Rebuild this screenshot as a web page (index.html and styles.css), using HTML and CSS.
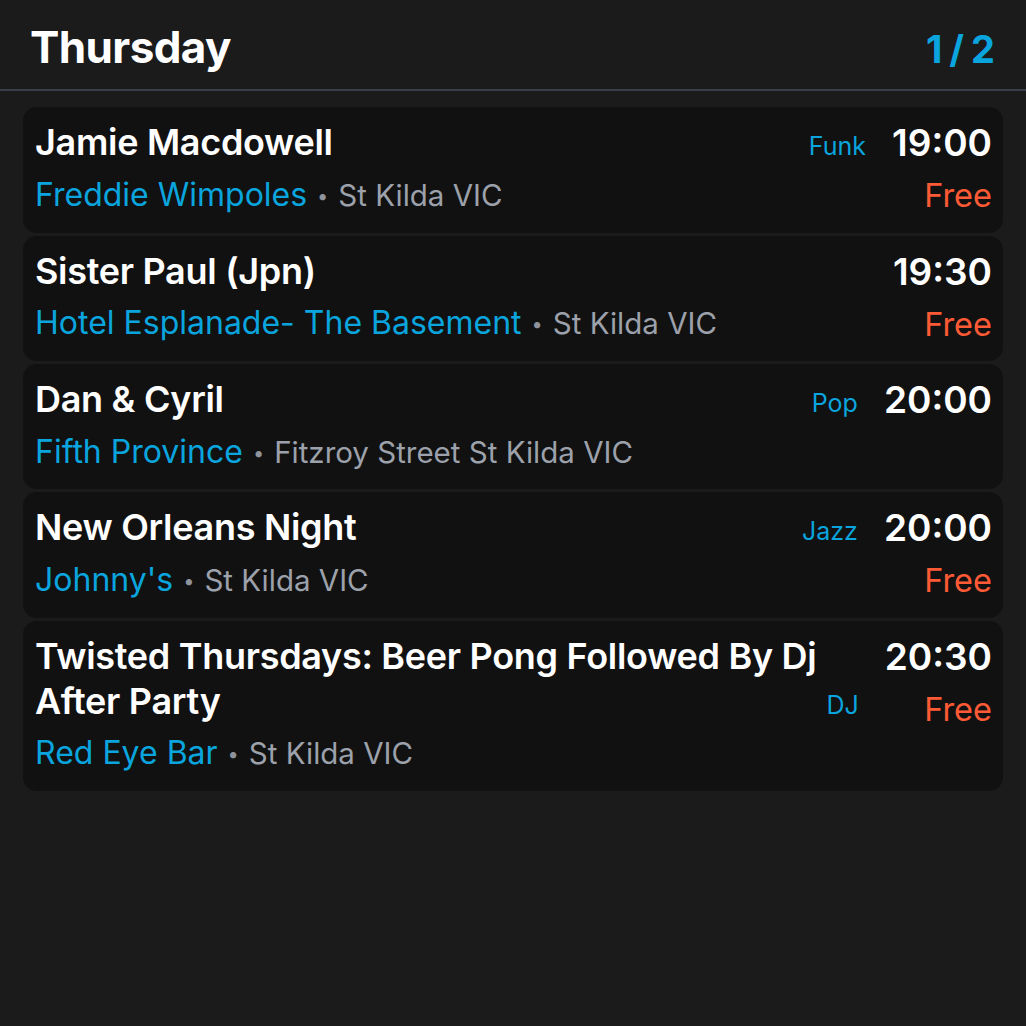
FILE: index.html
```html
<!DOCTYPE html>
<html lang="en">
<head>
<meta charset="utf-8">
<title>Thursday</title>
<link rel="stylesheet" href="styles.css">
</head>
<body>
<div class="screen">
  <header class="header">
    <h1 class="day">Thursday</h1>
    <div class="page">1 / 2</div>
  </header>
  <main class="list">
    <article class="card">
      <div class="main">
        <div class="title-row">
          <div class="title">Jamie Macdowell</div>
          <div class="genre">Funk</div>
        </div>
        <div class="venue-row"><span class="venue">Freddie Wimpoles</span><span class="dot">•</span><span class="place">St Kilda VIC</span></div>
      </div>
      <div class="side">
        <div class="time">19:00</div>
        <div class="price">Free</div>
      </div>
    </article>
    <article class="card">
      <div class="main">
        <div class="title-row">
          <div class="title">Sister Paul (Jpn)</div>
        </div>
        <div class="venue-row"><span class="venue">Hotel Esplanade- The Basement</span><span class="dot">•</span><span class="place">St Kilda VIC</span></div>
      </div>
      <div class="side">
        <div class="time">19:30</div>
        <div class="price">Free</div>
      </div>
    </article>
    <article class="card">
      <div class="main">
        <div class="title-row">
          <div class="title">Dan &amp; Cyril</div>
          <div class="genre">Pop</div>
        </div>
        <div class="venue-row"><span class="venue">Fifth Province</span><span class="dot">•</span><span class="place">Fitzroy Street St Kilda VIC</span></div>
      </div>
      <div class="side">
        <div class="time">20:00</div>
      </div>
    </article>
    <article class="card">
      <div class="main">
        <div class="title-row">
          <div class="title">New Orleans Night</div>
          <div class="genre">Jazz</div>
        </div>
        <div class="venue-row"><span class="venue">Johnny's</span><span class="dot">•</span><span class="place">St Kilda VIC</span></div>
      </div>
      <div class="side">
        <div class="time">20:00</div>
        <div class="price">Free</div>
      </div>
    </article>
    <article class="card">
      <div class="main">
        <div class="title-row">
          <div class="title">Twisted Thursdays: Beer Pong Followed By Dj After Party</div>
          <div class="genre">DJ</div>
        </div>
        <div class="venue-row"><span class="venue">Red Eye Bar</span><span class="dot">•</span><span class="place">St Kilda VIC</span></div>
      </div>
      <div class="side">
        <div class="time">20:30</div>
        <div class="price">Free</div>
      </div>
    </article>
  </main>
</div>
</body>
</html>
```
FILE: styles.css
```css
html, body {
  margin: 0;
  padding: 0;
  background: #1b1b1b;
}
body {
  font-family: Inter, "Noto Sans", sans-serif;
  color: #ffffff;
  width: 1026px;
  height: 1026px;
  overflow: hidden;
}
.screen {
  display: flex;
  flex-direction: column;
}
.header {
  display: flex;
  align-items: flex-start;
  justify-content: space-between;
  height: 49px;
  padding: 20px 31px 20px 30px;
  border-bottom: 2px solid #3a404b;
}
.day {
  margin: 0;
  font-size: 44px;
  font-weight: 700;
  line-height: 54px;
  letter-spacing: -0.6px;
}
.page {
  margin-top: 7px;
  font-size: 38px;
  font-weight: 700;
  line-height: 45px;
  color: #0aa5de;
  word-spacing: -2px;
}
.list {
  display: flex;
  flex-direction: column;
  gap: 3px;
  padding: 16px 23px 0 23px;
}
.card {
  display: flex;
  gap: 26px;
  background: #111111;
  border-radius: 14px;
  padding: 13px 11px 16.5px 12px;
}
.main {
  flex: 1;
  min-width: 0;
}
.title-row {
  display: flex;
  gap: 8px;
}
.title {
  flex: 1;
  font-size: 36px;
  font-weight: 600;
  line-height: 45px;
  letter-spacing: -0.3px;
}
.genre {
  align-self: flex-end;
  font-size: 25px;
  line-height: 37px;
  color: #0aa5de;
}
.venue-row {
  margin-top: 7.5px;
  font-size: 32px;
  line-height: 43px;
  white-space: nowrap;
}
.venue {
  color: #0aa5de;
}
.dot {
  color: #8e939c;
  font-size: 20px;
  line-height: 1;
  margin: 0 10px;
  vertical-align: 3px;
}
.place {
  color: #9ca1ab;
  font-size: 29.5px;
  line-height: 1;
}
.side {
  display: flex;
  flex-direction: column;
  align-items: flex-end;
}
.time {
  font-size: 37px;
  font-weight: 600;
  line-height: 45px;
}
.price {
  margin-top: 11px;
  font-size: 32.5px;
  line-height: 40px;
  color: #ff5a36;
}
```
